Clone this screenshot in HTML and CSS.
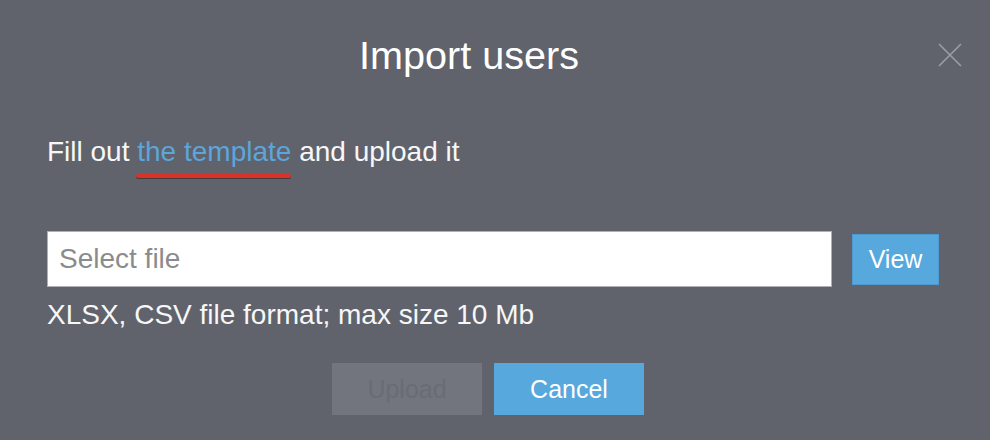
FILE: index.html
```html
<!DOCTYPE html>
<html lang="en">
<head>
<meta charset="utf-8">
<title>Import users</title>
<link rel="stylesheet" href="styles.css">
</head>
<body>
<div class="dialog">
  <header class="dialog-header">
    <h1 class="dialog-title">Import users</h1>
    <button class="close-btn" type="button" aria-label="Close">
      <svg width="24" height="24" viewBox="0 0 24 24"><path d="M1 1 L23 23 M23 1 L1 23" stroke="#9c9ea5" stroke-width="1.6" fill="none"/></svg>
    </button>
  </header>
  <p class="intro">Fill out <span class="link">the template</span> and upload it</p>
  <div class="file-row">
    <div class="file-input">Select file</div>
    <button class="btn btn-primary btn-view" type="button">View</button>
  </div>
  <p class="hint">XLSX, CSV file format; max size 10 Mb</p>
  <div class="actions">
    <button class="btn btn-disabled" type="button">Upload</button>
    <button class="btn btn-primary" type="button">Cancel</button>
  </div>
</div>
</body>
</html>
```
FILE: styles.css
```css
html, body {
  margin: 0;
  padding: 0;
  background: #60636c;
  height: 100%;
  overflow: hidden;
}
body {
  font-family: "Liberation Sans", Arial, sans-serif;
  color: #f7f7f7;
}
.dialog {
  padding: 32px 50px 0 47px;
}
.dialog-header {
  display: flex;
  align-items: center;
  height: 46px;
}
.dialog-title {
  flex: 1;
  margin: 0;
  font-size: 39.6px;
  line-height: 46px;
  font-weight: normal;
  text-align: center;
  color: #ffffff;
}
.close-btn {
  width: 71px;
  height: 46px;
  margin-right: -22px;
  padding: 0;
  border: 0;
  background: transparent;
  display: flex;
  align-items: center;
  justify-content: flex-end;
}
.close-btn svg {
  display: block;
}
.intro {
  margin: 58px 0 0;
  font-size: 28px;
  line-height: 32px;
}
.link {
  position: relative;
  color: #5ba6dc;
}
.link::after {
  content: "";
  position: absolute;
  left: -1px;
  right: 0;
  bottom: -11px;
  height: 4px;
  border-radius: 2px;
  background: #d9322b;
  box-shadow: 0 1px 0 #4a3a3c;
}
.file-row {
  display: flex;
  align-items: center;
  gap: 20px;
  margin-top: 63px;
}
.file-input {
  box-sizing: border-box;
  width: 785px;
  height: 56px;
  background: #ffffff;
  border: 1px solid #aeb0b5;
  padding: 0 11px;
  display: flex;
  align-items: center;
  font-size: 28px;
  color: #8b8b8e;
}
.btn {
  box-sizing: border-box;
  font-family: "Liberation Sans", Arial, sans-serif;
  font-size: 25px;
  border: 0;
  padding: 0;
  height: 52px;
  width: 150px;
  color: #ffffff;
}
.btn-primary {
  background: #56a8dd;
}
.btn-view {
  width: 87px;
  height: 51px;
  border: 1px solid #4f9bd0;
}
.btn-disabled {
  background: #72757e;
  color: #696c75;
}
.hint {
  margin: 12px 0 0;
  font-size: 28px;
  line-height: 32px;
}
.actions {
  display: flex;
  justify-content: center;
  gap: 12px;
  margin-top: 32px;
  padding-right: 11px;
}
```
